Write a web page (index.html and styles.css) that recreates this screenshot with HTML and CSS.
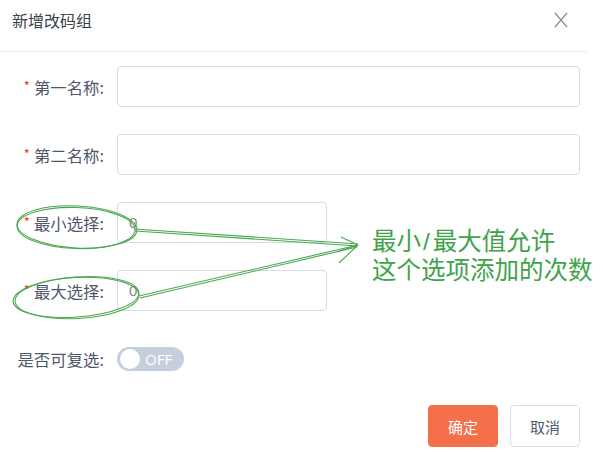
FILE: index.html
```html
<!DOCTYPE html>
<html lang="zh">
<head>
<meta charset="utf-8">
<link rel="stylesheet" href="styles.css">
</head>
<body>
<div class="modal">
  <div class="header">
    <div class="title">新增改码组</div>
    <svg class="close" width="14" height="16" viewBox="0 0 14 16"><path d="M1 1 L13 15 M13 1 L1 15" stroke="#8a8f99" stroke-width="1.3" fill="none"/></svg>
  </div>
  <div class="form">
    <div class="row">
      <label class="label"><span class="req">*</span>第一名称:</label>
      <div class="input wide"></div>
    </div>
    <div class="row">
      <label class="label"><span class="req">*</span>第二名称:</label>
      <div class="input wide"></div>
    </div>
    <div class="row">
      <label class="label"><span class="req">*</span>最小选择:</label>
      <div class="input narrow">0</div>
    </div>
    <div class="row">
      <label class="label"><span class="req">*</span>最大选择:</label>
      <div class="input narrow">0</div>
    </div>
    <div class="row">
      <label class="label">是否可复选:</label>
      <div class="switch"><span class="knob"></span><span class="off">OFF</span></div>
    </div>
  </div>
  <div class="footer">
    <button class="btn primary">确定</button>
    <button class="btn">取消</button>
  </div>
</div>
<div class="note">
  <div class="note-line">最小<span class="slash">/</span>最大值允许</div>
  <div class="note-line">这个选项添加的次数</div>
</div>
<svg class="marks" width="603" height="452" viewBox="0 0 603 452">
  <g fill="none" stroke="#4aa852" stroke-width="1.1">
    <ellipse cx="77" cy="227" rx="60" ry="21" transform="rotate(3 77 227)"/>
    <ellipse cx="76" cy="228" rx="59" ry="20.5" transform="rotate(2 76 228)"/>
    <ellipse cx="76" cy="297" rx="63" ry="20" transform="rotate(-4 76 297)"/>
    <ellipse cx="77" cy="298" rx="62" ry="20.5" transform="rotate(-3 77 298)"/>
    <path d="M134 229 L358 244"/>
    <path d="M135 231 L357 246"/>
    <path d="M139 296 L358 245"/>
    <path d="M140 298 L357 247"/>
    <path d="M358 245 L341 237"/>
    <path d="M358 245 L337 252"/>
    <path d="M358 245 L339 263"/>
  </g>
</svg>
</body>
</html>
```
FILE: styles.css
```css
html, body {
  margin: 0;
  padding: 0;
  background: #fff;
}
body {
  width: 603px;
  height: 452px;
  position: relative;
  overflow: hidden;
  font-family: "Noto Sans CJK SC", "Noto Sans", sans-serif;
  color: #515a6e;
}
.modal {
  width: 588px;
}
.header {
  height: 52px;
  border-bottom: 1px solid #ebedf0;
  display: flex;
  align-items: center;
  justify-content: space-between;
  padding: 0 20px 0 12px;
  box-sizing: border-box;
}
.title {
  font-size: 16px;
  color: #3a3f48;
  margin-top: -12px;
}
.close {
  margin-top: -12px;
}
.form {
  padding-top: 14px;
}
.row {
  display: flex;
  align-items: center;
  height: 41px;
  margin-bottom: 27px;
}
.label {
  width: 104px;
  padding-right: 13px;
  text-align: right;
  font-size: 16.4px;
  color: #4f586a;
  flex: none;
  white-space: nowrap;
}
.req {
  color: #ed4014;
  font-size: 13px;
  margin-right: 4px;
  position: relative;
  top: -3px;
}
.input {
  height: 41px;
  box-sizing: border-box;
  border: 1.5px solid #d5dbe6;
  border-radius: 4px;
  display: flex;
  align-items: center;
  padding-left: 11px;
  font-family: "Liberation Sans", sans-serif;
  font-size: 15px;
  color: #808695;
}
.input.wide {
  width: 463px;
}
.input.narrow {
  width: 210px;
}
.switch {
  width: 67px;
  height: 24px;
  border-radius: 12px;
  background: #c5cfdd;
  display: flex;
  align-items: center;
  padding-left: 3px;
  box-sizing: border-box;
}
.knob {
  width: 20px;
  height: 20px;
  border-radius: 50%;
  background: #fff;
  flex: none;
}
.off {
  color: #fff;
  font-family: "Open Sans", sans-serif;
  font-size: 15px;
  margin-left: 5px;
}
.footer {
  display: flex;
  justify-content: flex-end;
  gap: 12px;
  margin-top: -1px;
  padding-right: 8px;
}
.btn {
  width: 70px;
  height: 42px;
  border-radius: 4px;
  border: 1px solid #dcdee2;
  background: #fff;
  font-family: "Noto Sans CJK SC", sans-serif;
  font-size: 15px;
  color: #515a6e;
  padding: 0;
}
.btn.primary {
  background: #f4704b;
  border-color: #f4704b;
  color: #fff;
}
.note {
  position: absolute;
  left: 372px;
  top: 227px;
  color: #3fa34a;
  white-space: nowrap;
  font-family: "Liberation Sans", "Noto Sans CJK SC", sans-serif;
}
.note-line {
  font-size: 24.5px;
  line-height: 29px;
  height: 29px;
}
.slash {
  margin: 0 3px 0 2px;
}
.marks {
  position: absolute;
  left: 0;
  top: 0;
  pointer-events: none;
}
```
